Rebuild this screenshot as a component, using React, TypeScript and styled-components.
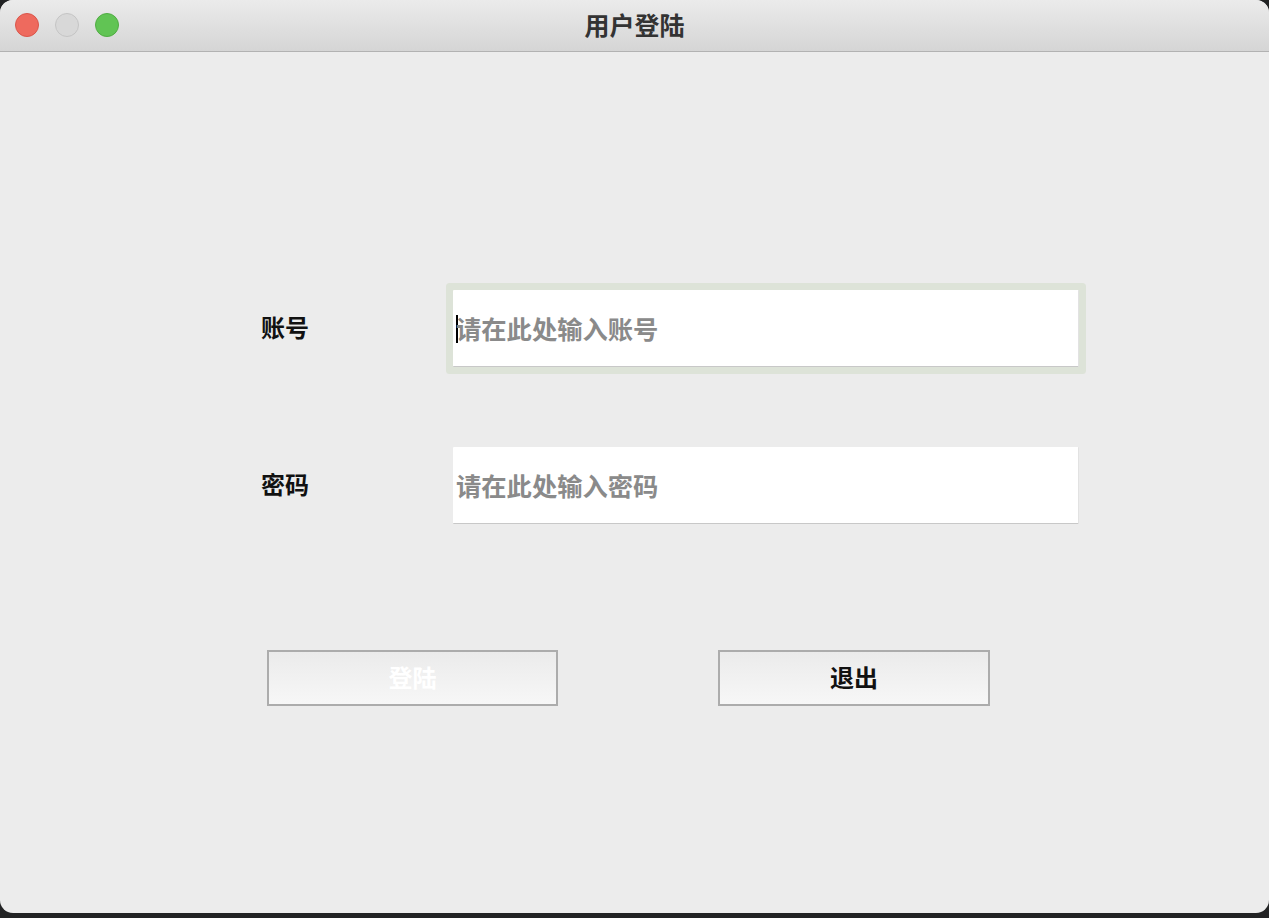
import styled, { createGlobalStyle } from 'styled-components';

const GlobalStyle = createGlobalStyle`
    html, body {
        margin: 0;
        padding: 0;
        background: #222324;
        font-family: "Noto Sans CJK SC", "Noto Sans", sans-serif;
    }
`;

const LoginWindow = () => {
    return (
        <Window>
            <TitleBar>
                <Lights>
                    <Light color="#ee6a5e" ring="#d9564b" />
                    <Light color="#d8d8d8" ring="#c4c4c4" />
                    <Light color="#61c454" ring="#50ac43" />
                </Lights>
                <Title>用户登陆</Title>
            </TitleBar>
            <Body>
                <FieldRow>
                    <Label>账号</Label>
                    <InputBox focused>
                        <Caret />
                        <Placeholder>请在此处输入账号</Placeholder>
                    </InputBox>
                </FieldRow>
                <FieldRow>
                    <Label>密码</Label>
                    <InputBox>
                        <Placeholder>请在此处输入密码</Placeholder>
                    </InputBox>
                </FieldRow>
                <ButtonRow>
                    <Button width={291} disabled>
                        登陆
                    </Button>
                    <Button width={272}>退出</Button>
                </ButtonRow>
            </Body>
        </Window>
    );
};

const Window = styled.div`
    width: 1269px;
    height: 913px;
    background: #ececec;
    border-radius: 13px;
    overflow: hidden;
    display: flex;
    flex-direction: column;
`;

const TitleBar = styled.div`
    height: 51px;
    flex-shrink: 0;
    background: linear-gradient(#ebebeb, #d5d5d5);
    border-bottom: 1px solid #b2b2b2;
    display: flex;
    align-items: center;
    justify-content: center;
    position: relative;
`;

const Lights = styled.div`
    position: absolute;
    left: 15px;
    top: 13px;
    display: flex;
    gap: 16px;
`;

const Light = styled.span<{ color: string; ring: string }>`
    width: 24px;
    height: 24px;
    border-radius: 50%;
    background: ${({ color }) => color};
    border: 1px solid ${({ ring }) => ring};
    box-sizing: border-box;
`;

const Title = styled.div`
    font-size: 25px;
    font-weight: 700;
    color: #333;
    margin-top: -3px;
`;

const Body = styled.div`
    padding: 238px 0 0 261px;
    display: flex;
    flex-direction: column;
`;

const FieldRow = styled.div`
    display: flex;
    align-items: center;
    height: 77px;
    margin-bottom: 80px;
`;

const Label = styled.div`
    width: 192px;
    font-size: 24px;
    font-weight: 700;
    color: #111;
    margin-top: -4px;
`;

const InputBox = styled.div<{ focused?: boolean }>`
    width: 626px;
    height: 77px;
    box-sizing: border-box;
    background: #fff;
    border-bottom: 1px solid #c8c8c8;
    border-right: 1px solid #e2e2e2;
    display: flex;
    align-items: center;
    padding-left: 3px;
    box-shadow: ${({ focused }) => (focused ? '0 0 0 7px #dde3d8' : 'none')};
    border-radius: 1px;
`;

const Caret = styled.span`
    width: 2px;
    height: 28px;
    background: #000;
    margin-right: -2px;
    margin-top: 2px;
`;

const Placeholder = styled.span`
    font-size: 25.3px;
    font-weight: 600;
    color: #8a8a8a;
    margin-top: -1px;
`;

const ButtonRow = styled.div`
    display: flex;
    gap: 160px;
    margin-top: 46px;
    padding-left: 6px;
`;

const Button = styled.div<{ width: number; disabled?: boolean }>`
    width: ${({ width }) => width}px;
    height: 56px;
    box-sizing: border-box;
    border: 2px solid #acacac;
    background: linear-gradient(#ebebeb, #f7f7f7);
    display: flex;
    align-items: center;
    justify-content: center;
    padding-bottom: 4px;
    font-size: 24px;
    font-weight: 700;
    color: ${({ disabled }) => (disabled ? '#ffffff' : '#111')};
`;

export default function App() {
    return (
        <>
            <GlobalStyle />
            <LoginWindow />
        </>
    );
}
